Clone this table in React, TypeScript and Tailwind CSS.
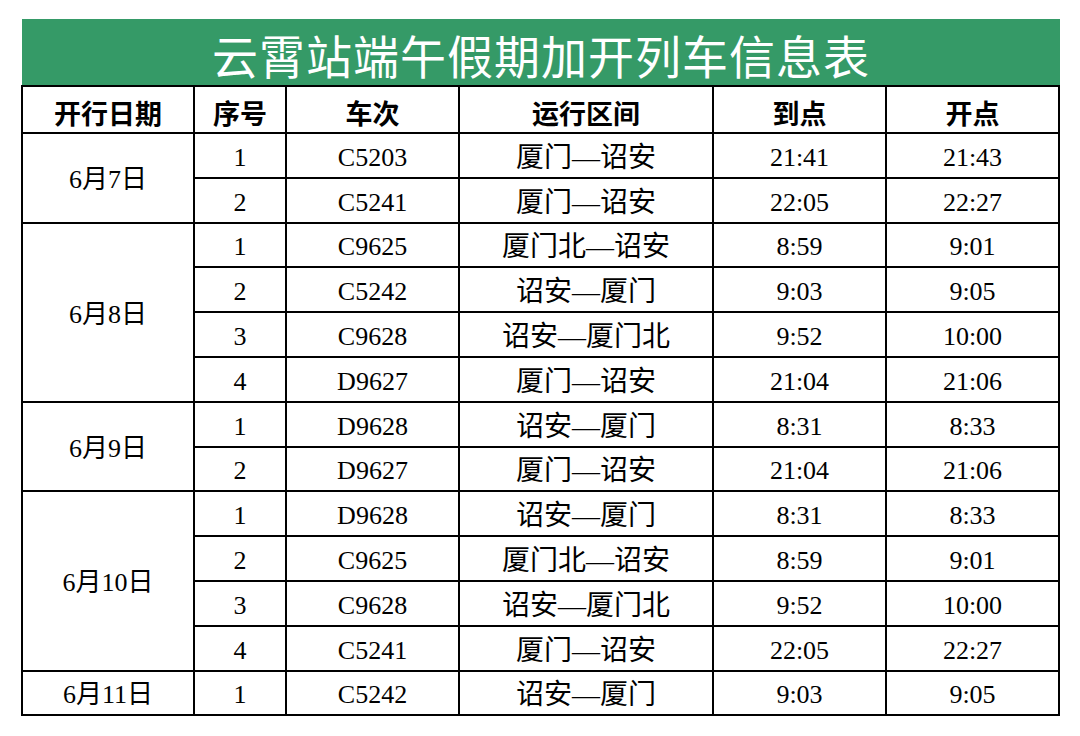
type Train = { no: number; code: string; route: string; arrive: string; depart: string };
type Day = { date: string; trains: Train[] };

const days: Day[] = [
  {
    date: "6月7日",
    trains: [
      { no: 1, code: "C5203", route: "厦门—诏安", arrive: "21:41", depart: "21:43" },
      { no: 2, code: "C5241", route: "厦门—诏安", arrive: "22:05", depart: "22:27" },
    ],
  },
  {
    date: "6月8日",
    trains: [
      { no: 1, code: "C9625", route: "厦门北—诏安", arrive: "8:59", depart: "9:01" },
      { no: 2, code: "C5242", route: "诏安—厦门", arrive: "9:03", depart: "9:05" },
      { no: 3, code: "C9628", route: "诏安—厦门北", arrive: "9:52", depart: "10:00" },
      { no: 4, code: "D9627", route: "厦门—诏安", arrive: "21:04", depart: "21:06" },
    ],
  },
  {
    date: "6月9日",
    trains: [
      { no: 1, code: "D9628", route: "诏安—厦门", arrive: "8:31", depart: "8:33" },
      { no: 2, code: "D9627", route: "厦门—诏安", arrive: "21:04", depart: "21:06" },
    ],
  },
  {
    date: "6月10日",
    trains: [
      { no: 1, code: "D9628", route: "诏安—厦门", arrive: "8:31", depart: "8:33" },
      { no: 2, code: "C9625", route: "厦门北—诏安", arrive: "8:59", depart: "9:01" },
      { no: 3, code: "C9628", route: "诏安—厦门北", arrive: "9:52", depart: "10:00" },
      { no: 4, code: "C5241", route: "厦门—诏安", arrive: "22:05", depart: "22:27" },
    ],
  },
  {
    date: "6月11日",
    trains: [{ no: 1, code: "C5242", route: "诏安—厦门", arrive: "9:03", depart: "9:05" }],
  },
];

const headers = ["开行日期", "序号", "车次", "运行区间", "到点", "开点"];
const cell = "border-2 border-black px-0 pb-0 pt-[5px] text-center align-middle";

export default function App() {
  return (
    <div className="min-h-[736px] w-[1080px] bg-white pl-[21px] pt-[19px] font-['Liberation_Serif','Noto_Sans_CJK_SC',serif] text-black">
      <div className="ml-[1px] flex h-[66px] w-[1038px] items-center justify-center bg-[#359a67] pt-[3px]">
        <h1 className="font-['Noto_Sans_CJK_SC',sans-serif] text-[46px] leading-none tracking-[1px] text-white">
          云霄站端午假期加开列车信息表
        </h1>
      </div>
      <table className="w-[1039px] table-fixed border-collapse">
        <colgroup>
          <col className="w-[172px]" />
          <col className="w-[92px]" />
          <col className="w-[173px]" />
          <col className="w-[254px]" />
          <col className="w-[173px]" />
          <col className="w-[173px]" />
        </colgroup>
        <thead>
          <tr className="h-[47px]">
            {headers.map((h) => (
              <th key={h} className={`${cell} font-['Noto_Sans_CJK_SC',sans-serif] text-[27px] font-bold leading-none`}>
                {h}
              </th>
            ))}
          </tr>
        </thead>
        <tbody className="text-[26px] leading-none">
          {days.map((d) =>
            d.trains.map((t, i) => (
              <tr key={d.date + t.no} className="h-[44.8px]">
                {i === 0 && (
                  <td rowSpan={d.trains.length} className={cell}>
                    {d.date}
                  </td>
                )}
                <td className={cell}>{t.no}</td>
                <td className={cell}>{t.code}</td>
                <td className={`${cell} text-[28px]`}>{t.route}</td>
                <td className={cell}>{t.arrive}</td>
                <td className={cell}>{t.depart}</td>
              </tr>
            ))
          )}
        </tbody>
      </table>
    </div>
  );
}
